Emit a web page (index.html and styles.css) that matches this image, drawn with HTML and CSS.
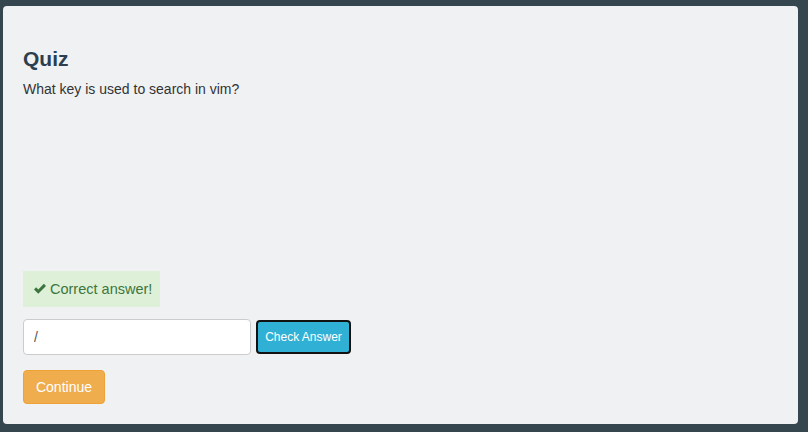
FILE: index.html
```html
<!DOCTYPE html>
<html>
<head>
<meta charset="utf-8">
<link rel="stylesheet" href="styles.css">
</head>
<body>
<div class="card">
  <h1 class="title">Quiz</h1>
  <p class="question">What key is used to search in vim?</p>
  <div class="spacer"></div>
  <div class="alert"><svg class="check" viewBox="0 0 16 14" width="14" height="12"><path d="M1 7.5 L3.5 5 L6 7.5 L12.5 1 L15 3.5 L6 12.5 Z" fill="#3c763d"/></svg>Correct answer!</div>
  <div class="answer-row">
    <input class="answer" type="text" value="/">
    <button class="btn-check">Check Answer</button>
  </div>
  <button class="btn-continue">Continue</button>
</div>
</body>
</html>
```
FILE: styles.css
```css
html, body {
  margin: 0;
  padding: 0;
  background: #35464f;
  height: 100%;
}
body {
  padding: 6px 10px 8px 3px;
  box-sizing: border-box;
  font-family: "Liberation Sans", Arial, sans-serif;
}
.card {
  background: #f0f1f3;
  border-radius: 4px;
  height: 418px;
  padding: 0 20px;
  box-sizing: border-box;
  display: flex;
  flex-direction: column;
  align-items: flex-start;
}
.title {
  margin: 41px 0 0;
  font-size: 21px;
  line-height: 24px;
  font-weight: bold;
  color: #2c3e50;
}
.question {
  margin: 8px 0 0;
  font-size: 14px;
  line-height: 20px;
  color: #333;
}
.spacer {
  height: 172px;
}
.alert {
  display: flex;
  align-items: center;
  gap: 3px;
  height: 36px;
  box-sizing: border-box;
  padding: 0 10px 0 10px;
  width: 137px;
  background: #dff0d8;
  color: #3c763d;
  font-size: 14.5px;
  white-space: nowrap;
}
.check {
  display: block;
  flex: none;
}
.answer-row {
  display: flex;
  align-items: center;
  gap: 5px;
  margin-top: 12px;
}
.answer {
  width: 228px;
  height: 36px;
  box-sizing: border-box;
  border: 1px solid #ccc;
  border-radius: 4px;
  background: #fff;
  padding: 0 10px;
  font-family: "Liberation Sans", Arial, sans-serif;
  font-size: 14px;
  color: #555;
  margin: 0;
}
.btn-check {
  width: 95px;
  height: 34px;
  box-sizing: border-box;
  border: 2px solid #111;
  border-radius: 4px;
  background: #31b0d5;
  color: #fff;
  font-family: "Liberation Sans", Arial, sans-serif;
  font-size: 12px;
  padding: 0;
  margin: 0;
}
.btn-continue {
  margin-top: 15px;
  width: 82px;
  height: 34px;
  box-sizing: border-box;
  border: 1px solid #eea236;
  border-radius: 4px;
  background: #f0ad4e;
  color: #fff;
  font-family: "Liberation Sans", Arial, sans-serif;
  font-size: 14px;
  padding: 0;
}
```
